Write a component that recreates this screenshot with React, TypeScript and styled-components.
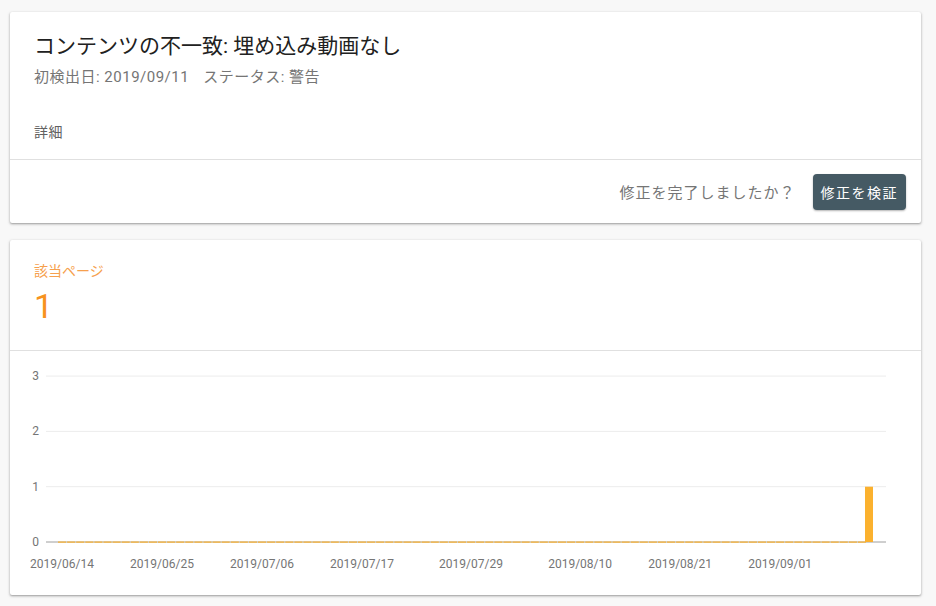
import React from "react";
import styled, { createGlobalStyle } from "styled-components";

const Global = createGlobalStyle`
  html, body { margin: 0; padding: 0; background: #f8f8f8; }
  body { font-family: Roboto, "Noto Sans CJK JP", sans-serif; }
  * { box-sizing: border-box; }
`;

const Page = styled.div`
  padding: 12px 15px 10px 10px;
  display: flex;
  flex-direction: column;
  gap: 17px;
`;

const Card = styled.section`
  background: #fff;
  border-radius: 2px;
  box-shadow: 0 1px 2px rgba(0,0,0,0.3), 0 1px 3px 1px rgba(0,0,0,0.08);
  overflow: hidden;
`;

const Header = styled.div`
  padding: 20px 24px 0 24px;
  height: 148px;
  border-bottom: 1px solid #e0e0e0;
  display: flex;
  flex-direction: column;
`;

const Title = styled.h1`
  margin: 0;
  font-size: 21px;
  line-height: 28px;
  font-weight: 400;
  color: #212121;
`;

const Meta = styled.div`
  margin-top: 7px;
  font-size: 15px;
  letter-spacing: 0.5px;
  line-height: 20px;
  color: #757575;
  display: flex;
  gap: 14px;
`;

const Detail = styled.div`
  margin-top: 35px;
  font-size: 14px;
  letter-spacing: 0.5px;
  line-height: 20px;
  color: #616161;
`;

const Footer = styled.div`
  height: 63px;
  display: flex;
  align-items: center;
  justify-content: flex-end;
  padding: 0 15px 0 24px;
  gap: 17px;
`;

const Question = styled.span`
  font-size: 15px;
  letter-spacing: 1px;
  color: #757575;
`;

const Button = styled.button`
  height: 36px;
  padding: 0 8px;
  border: none;
  border-radius: 4px;
  background: #455a64;
  color: #fff;
  font-family: inherit;
  font-size: 14px;
  letter-spacing: 1.5px;
  box-shadow: 0 1px 2px rgba(0,0,0,0.3);
  cursor: pointer;
`;

const Summary = styled.div`
  padding: 22px 24px 0 24px;
  height: 111px;
  border-bottom: 1px solid #e0e0e0;
`;

const Label = styled.div`
  font-size: 14px;
  line-height: 18px;
  color: #f6a04d;
`;

const Count = styled.div`
  margin-top: 6px;
  font-size: 34px;
  line-height: 40px;
  color: #f7931e;
`;

const ChartWrap = styled.div`
  height: 244px;
`;

const dates = [
  "2019/06/14",
  "2019/06/25",
  "2019/07/06",
  "2019/07/17",
  "2019/07/29",
  "2019/08/10",
  "2019/08/21",
  "2019/09/01",
];

const Chart: React.FC = () => {
  const top = 351;
  const x0 = 36;
  const x1 = 876;
  const yFor = (v: number) => 542 - top - v * 55.3;
  const dayW = 9.09;
  const day0 = 52;
  const days = 90;
  const bars = [];
  for (let i = 0; i < days - 1; i++) {
    const cx = day0 + i * dayW;
    bars.push(
      <rect key={i} x={cx - 4} y={yFor(0) - 0.5} width={8.1} height={1.2} fill="#fbb12e" />
    );
  }
  const labelDays = [0, 11, 22, 33, 45, 57, 68, 79];
  return (
    <svg width="911" height="244" viewBox="0 0 911 244">
      {[1, 2, 3].map((v) => (
        <line key={v} x1={x0} x2={x1} y1={yFor(v)} y2={yFor(v)} stroke="#ececec" strokeWidth="1" />
      ))}
      <line x1={x0} x2={x1} y1={yFor(0)} y2={yFor(0)} stroke="#9e9e9e" strokeWidth="1" />
      {bars}
      <rect x={855} y={yFor(1)} width={8} height={55.3} fill="#fbb12e" />
      {[0, 1, 2, 3].map((v) => (
        <text
          key={v}
          x={29}
          y={yFor(v) + 4}
          textAnchor="end"
          fontSize="12"
          fill="#757575"
          fontFamily="Roboto, sans-serif"
        >
          {v}
        </text>
      ))}
      {dates.map((d, i) => (
        <text
          key={d}
          x={day0 + labelDays[i] * dayW}
          y={217}
          textAnchor="middle"
          fontSize="12"
          fill="#757575"
          fontFamily="Roboto, sans-serif"
        >
          {d}
        </text>
      ))}
    </svg>
  );
};

export default function App() {
  return (
    <>
      <Global />
      <Page>
        <Card>
          <Header>
            <Title>コンテンツの不一致: 埋め込み動画なし</Title>
            <Meta>
              <span>初検出日: 2019/09/11</span>
              <span>ステータス: 警告</span>
            </Meta>
            <Detail>詳細</Detail>
          </Header>
          <Footer>
            <Question>修正を完了しましたか？</Question>
            <Button>修正を検証</Button>
          </Footer>
        </Card>
        <Card>
          <Summary>
            <Label>該当ページ</Label>
            <Count>1</Count>
          </Summary>
          <ChartWrap>
            <Chart />
          </ChartWrap>
        </Card>
      </Page>
    </>
  );
}
